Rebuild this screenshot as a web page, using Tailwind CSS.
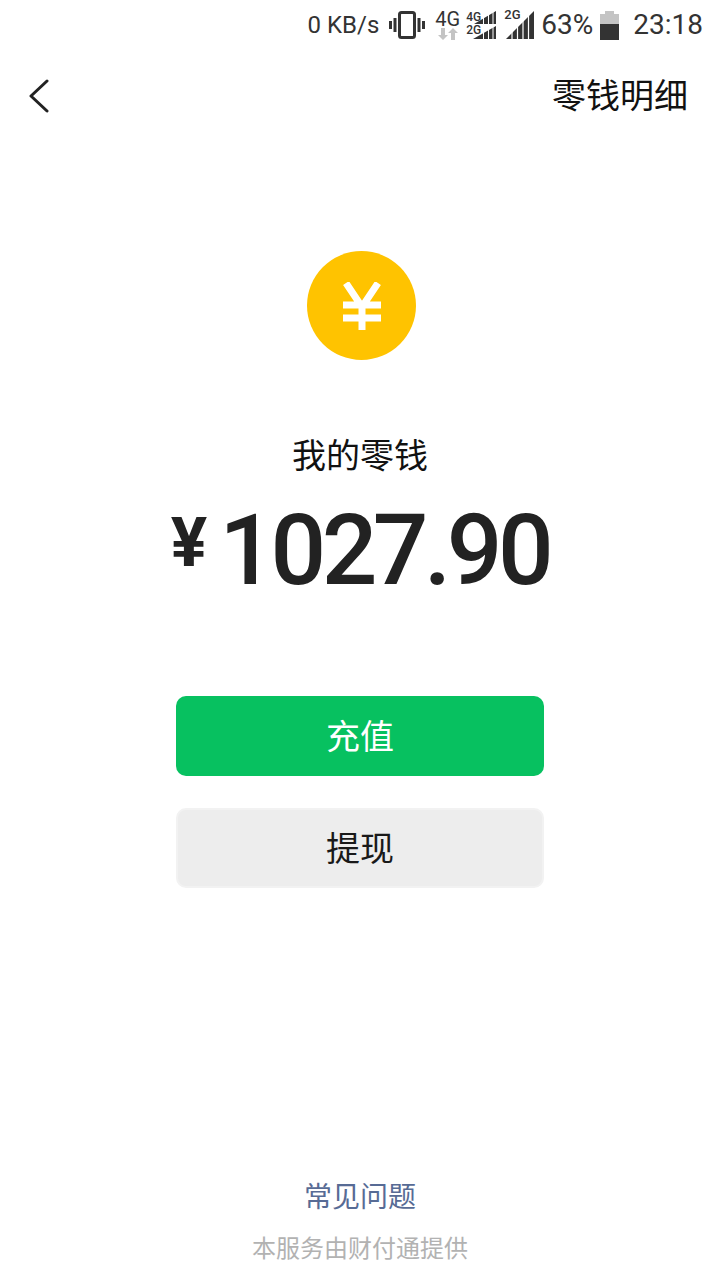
<!DOCTYPE html>
<html lang="zh-CN">
<head>
  <meta charset="UTF-8" />
  <meta name="viewport" content="width=device-width, initial-scale=1.0"/>
  <title>我的零钱</title>
  <script src="https://cdn.jsdelivr.net/npm/@tailwindcss/browser@4"></script>
</head>
<body class="bg-white">
  <div class="flex h-[1280px] w-[720px] flex-col overflow-hidden bg-white font-['Roboto','Noto_Sans_CJK_SC',sans-serif] text-[#222222]">

    <!-- status bar -->
    <div class="flex h-[50px] items-center justify-end pr-[17px] text-[#333333]">
      <span class="text-[24px] leading-none">0 KB/s</span>
      <svg class="ml-[10px]" width="36" height="28" viewBox="0 0 36 28" fill="none" stroke="#333" stroke-width="3">
        <rect x="10.5" y="1.5" width="15" height="25" rx="2"/>
        <path d="M1.5 10v8M6 7v14M30 7v14M34.5 10v8"/>
      </svg>
      <div class="ml-[10px] flex w-[25px] flex-col items-center">
        <span class="text-[20px] leading-[18px]">4G</span>
        <svg width="20" height="12" viewBox="0 0 20 12" fill="#c4c4c4"><path d="M3 0h4v7h3l-5 5-5-5h3zM13 12h4V5h3l-5-5-5 5h3z"/></svg>
      </div>
      <div class="relative ml-[6px] h-[30px] w-[30px]">
        <svg class="absolute inset-0" width="30" height="30" viewBox="0 0 30 30" fill="#333"><path d="M30 1v13H8zM30 16v13H7z"/><path d="M17.5 1v13M22.5 1v13M17.5 16v13M22.5 16v13M27 1v13M27 16v13" stroke="#fff" stroke-width="1"/></svg>
        <span class="absolute top-[1px] left-0 text-[12px] leading-[12px] font-medium">4G</span>
        <span class="absolute top-[14px] left-0 text-[12px] leading-[12px] font-medium">2G</span>
      </div>
      <div class="relative ml-[8px] h-[30px] w-[30px]">
        <svg class="absolute inset-0" width="30" height="30" viewBox="0 0 30 30" fill="#333"><path d="M30 1v28H2z"/><path d="M8 10v20M13.5 10v20M19 5v25M24.5 1v29" stroke="#fff" stroke-width="1.2"/></svg>
        <span class="absolute -top-[1px] left-0 text-[13px] leading-[12px] font-medium">2G</span>
      </div>
      <span class="ml-[7px] text-[28px] leading-none">63%</span>
      <div class="ml-[7px] flex h-[29px] w-[19px] flex-col items-center">
        <div class="h-[3px] w-[9px] bg-[#c4c4c4]"></div>
        <div class="h-[10px] w-full bg-[#c4c4c4]"></div>
        <div class="h-[16px] w-full bg-[#333333]"></div>
      </div>
      <span class="ml-[14px] text-[28px] leading-none">23:18</span>
    </div>

    <!-- header -->
    <div class="flex h-[92px] items-center justify-between pr-[32px] pl-[29px]">
      <svg width="20" height="34" viewBox="0 0 20 34" fill="none" stroke="#222" stroke-width="3" stroke-linecap="round" stroke-linejoin="round"><path d="M18 2 2 17l16 15"/></svg>
      <span class="text-[34px] leading-none text-[#111111]">零钱明细</span>
    </div>

    <!-- balance -->
    <div class="flex flex-col items-center pt-[109px]">
      <div class="ml-[3px] flex h-[109px] w-[109px] items-center justify-center rounded-full bg-[#ffc300]">
        <svg width="40" height="48" viewBox="0 0 40 48" fill="none" stroke="#fff" stroke-width="7"><path d="M4 1l16 24L36 1M20 24v24M1 23h38M1 36h38"/></svg>
      </div>
      <p class="mt-[76px] text-[34px] leading-[40px] text-[#111111]">我的零钱</p>
      <div class="mt-[25px] flex h-[100px] items-start">
        <span class="mt-[2px] text-[68px] leading-[80px] font-bold">¥</span>
        <span class="ml-[12px] text-[98px] leading-[100px] font-medium tracking-[-4.5px]">1027.90</span>
      </div>
    </div>

    <!-- actions -->
    <div class="mt-[95px] flex flex-col items-center gap-[32px]">
      <button class="h-[80px] w-[368px] rounded-[10px] bg-[#07c160] pt-[2px] text-[34px] text-white">充值</button>
      <button class="h-[80px] w-[368px] rounded-[10px] border-2 border-[#f2f2f2] bg-[#ededed] pt-[2px] text-[34px] text-[#191919]">提现</button>
    </div>

    <!-- footer -->
    <div class="mt-auto flex flex-col items-center pb-[14px]">
      <span class="text-[28px] leading-[40px] text-[#576b95]">常见问题</span>
      <span class="mt-[14px] text-[24px] leading-[34px] text-[#b2b2b2]">本服务由财付通提供</span>
    </div>
  </div>
</body>
</html>
